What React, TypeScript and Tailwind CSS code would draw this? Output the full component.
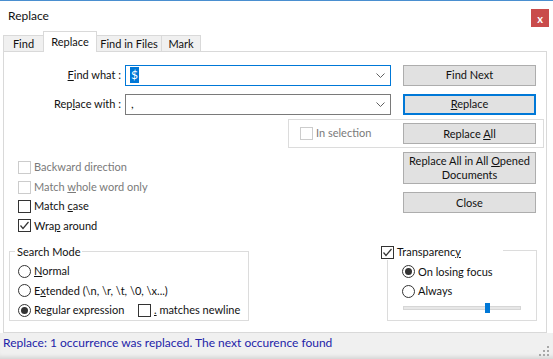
import React from 'react';

function Check({ checked = false, disabled = false }: { checked?: boolean; disabled?: boolean }) {
    return (
        <span
            className={
                'flex h-[13px] w-[13px] shrink-0 items-center justify-center border bg-white ' +
                (disabled ? 'border-[#cccccc]' : 'border-[#333333]')
            }
        >
            {checked && (
                <svg width="11" height="11" viewBox="0 0 11 11" fill="none" stroke="#333" strokeWidth="1.2">
                    <polyline points="1.5,5.5 4,8.5 9.5,2" />
                </svg>
            )}
        </span>
    );
}

function Radio({ checked = false }: { checked?: boolean }) {
    return (
        <span className="flex h-[13px] w-[13px] shrink-0 items-center justify-center rounded-full border border-[#333333] bg-white">
            {checked && <span className="h-[7px] w-[7px] rounded-full bg-[#333333]" />}
        </span>
    );
}

function Btn({ children, primary = false, className = '' }: { children: React.ReactNode; primary?: boolean; className?: string }) {
    return (
        <button
            className={
                'w-[133px] whitespace-nowrap bg-[#e1e1e1] text-center leading-[14px] ' +
                (primary ? 'border-2 border-[#0078d7] ' : 'border border-[#adadad] ') +
                className
            }
        >
            {children}
        </button>
    );
}

function Chevron() {
    return (
        <svg width="9" height="5" viewBox="0 0 9 5" fill="none" stroke="#606060" strokeWidth="1">
            <polyline points="0.5,0.5 4.5,4.5 8.5,0.5" />
        </svg>
    );
}

export default function App() {
    return (
        <div className="flex h-[359px] w-[553px] flex-col overflow-hidden bg-white font-['Lato','Liberation_Sans',sans-serif] text-[11px] text-[#111111]">
            {/* title bar */}
            <div className="flex h-[31px] shrink-0 items-start border-t border-[#4a8fd0] pl-[8px] pr-[4px]">
                <span className="mt-[7px] text-[12px] leading-[16px]">Replace</span>
                <span className="ml-auto mt-[8px] flex h-[18px] w-[18px] items-center justify-center bg-[#c94b4b] text-[11px] font-bold leading-none text-white">
                    x
                </span>
            </div>

            {/* tabs */}
            <div className="flex h-[20px] shrink-0 items-end pl-[3px]">
                <div className="flex h-[16px] w-[41px] items-center justify-center border border-b-0 border-[#d9d9d9] bg-[#f0f0f0] leading-none">
                    Find
                </div>
                <div className="relative z-10 -mb-px -ml-px flex h-[21px] w-[54px] items-start justify-center border border-b-0 border-[#d9d9d9] bg-white pt-[3px] leading-[14px]">
                    Replace
                </div>
                <div className="-ml-px flex h-[16px] w-[66px] items-center justify-center whitespace-nowrap border border-b-0 border-[#d9d9d9] bg-[#f0f0f0] leading-none">
                    Find in Files
                </div>
                <div className="-ml-px flex h-[16px] w-[40px] items-center justify-center border border-b-0 border-[#d9d9d9] bg-[#f0f0f0] leading-none">
                    Mark
                </div>
            </div>

            {/* tab panel */}
            <div className="ml-[3px] flex h-[282px] w-[544px] shrink-0 flex-col border border-[#d9d9d9] bg-white">
                <div className="mt-[12px] flex h-[22px] items-center">
                    <label className="w-[117px] text-right">
                        <span className="underline">F</span>ind what :
                    </label>
                    <div className="ml-[4px] flex h-[21px] w-[266px] items-center border border-[#0078d7] pl-[4px] pr-[5px]">
                        <span className="bg-[#0078d7] px-[1px] text-[12px] leading-[16px] text-white">$</span>
                        <span className="ml-auto">
                            <Chevron />
                        </span>
                    </div>
                    <Btn className="ml-auto mr-[10px] h-[21px]">Find Next</Btn>
                </div>

                <div className="mt-[7px] flex h-[22px] items-center">
                    <label className="w-[117px] text-right">
                        Rep<span className="underline">l</span>ace with :
                    </label>
                    <div className="ml-[4px] flex h-[21px] w-[266px] items-center border border-[#7a7a7a] pl-[5px] pr-[5px]">
                        <span className="text-[12px]">,</span>
                        <span className="ml-auto">
                            <Chevron />
                        </span>
                    </div>
                    <Btn primary className="ml-auto mr-[10px] h-[21px]">
                        <span className="underline">R</span>eplace
                    </Btn>
                </div>

                <div className="ml-[284px] mr-[2px] mt-[4px] flex h-[29px] items-center border border-[#dcdcdc] pl-[11px] pr-[7px]">
                    <Check disabled />
                    <span className="ml-[3px] text-[#7a7a7a]">
                        In select<span className="underline">i</span>on
                    </span>
                    <Btn className="ml-auto h-[21px]">
                        Replace <span className="underline">A</span>ll
                    </Btn>
                </div>

                <div className="flex items-start">
                    <div className="ml-[14px] mt-[10px] flex flex-col">
                        <div className="flex h-[19.4px] items-center">
                            <Check disabled />
                            <span className="ml-[3px] text-[#7a7a7a]">Backward direction</span>
                        </div>
                        <div className="flex h-[19.4px] items-center">
                            <Check disabled />
                            <span className="ml-[3px] text-[#7a7a7a]">
                                Match <span className="underline">w</span>hole word only
                            </span>
                        </div>
                        <div className="flex h-[19.4px] items-center">
                            <Check />
                            <span className="ml-[3px]">
                                Match <span className="underline">c</span>ase
                            </span>
                        </div>
                        <div className="flex h-[19.4px] items-center">
                            <Check checked />
                            <span className="ml-[3px]">
                                Wra<span className="underline">p</span> around
                            </span>
                        </div>
                    </div>
                    <div className="ml-auto mr-[10px] mt-[4px] flex flex-col">
                        <Btn className="h-[32px]">
                            Replace All in All <span className="underline">O</span>pened
                            <br />
                            Documents
                        </Btn>
                        <Btn className="mt-[8px] h-[21px]">Close</Btn>
                    </div>
                </div>

                <div className="mb-[11px] mt-auto flex items-end justify-between pl-[5px] pr-[9px]">
                    <fieldset className="w-[240px] border border-[#dcdcdc] pl-[5px]">
                        <legend className="px-[2px] leading-[16px]">Search Mode</legend>
                        <div className="ml-[3px] mt-[2px] flex flex-col whitespace-nowrap">
                            <div className="flex h-[19.5px] items-center">
                                <Radio />
                                <span className="ml-[3px]">
                                    <span className="underline">N</span>ormal
                                </span>
                            </div>
                            <div className="flex h-[19.5px] items-center">
                                <Radio />
                                <span className="ml-[3px]">
                                    E<span className="underline">x</span>tended (\n, \r, \t, \0, \x...)
                                </span>
                            </div>
                            <div className="flex h-[19.5px] items-center">
                                <div className="flex w-[120px] items-center">
                                    <Radio checked />
                                    <span className="ml-[3px]">
                                        Re<span className="underline">g</span>ular expression
                                    </span>
                                </div>
                                <Check />
                                <span className="ml-[3px]">
                                    <span className="underline">.</span> matches newline
                                </span>
                            </div>
                        </div>
                    </fieldset>

                    <div className="relative h-[71px] w-[150px] whitespace-nowrap border border-[#dcdcdc] pl-[14px] pt-[11px]">
                        <div className="absolute left-[-7px] top-[-5.5px] flex h-[14px] w-[122px] items-center bg-white">
                            <Check checked />
                            <span className="ml-[3px]">
                                Transparenc<span className="underline">y</span>
                            </span>
                        </div>
                        <div className="flex h-[19.5px] items-center">
                            <Radio checked />
                            <span className="ml-[3px]">On losing focus</span>
                        </div>
                        <div className="flex h-[19.5px] items-center">
                            <Radio />
                            <span className="ml-[3px]">Always</span>
                        </div>
                        <div className="relative ml-[1px] mt-[1px] flex h-[12px] w-[118px] items-center">
                            <div className="h-[4px] w-full border border-[#d6d6d6] bg-[#e7e7e7]" />
                            <div className="absolute left-[82px] top-[1px] h-[10px] w-[5px] bg-[#0078d7]" />
                        </div>
                    </div>
                </div>
            </div>

            {/* status bar */}
            <div className="flex flex-1 items-start bg-[#f0f0f0] pl-[3px] pr-[4px] pt-[3px] shadow-[inset_0_-5px_4px_-3px_rgba(0,0,0,0.12)]">
                <span className="text-[12px] leading-[14px] text-[#2323a8]">
                    Replace: 1 occurrence was replaced. The next occurence found
                </span>
                <svg className="ml-auto mt-[10px]" width="10" height="10" viewBox="0 0 10 10" fill="#a8a8a8">
                    <rect x="8" y="0" width="2" height="2" />
                    <rect x="4" y="4" width="2" height="2" />
                    <rect x="8" y="4" width="2" height="2" />
                    <rect x="0" y="8" width="2" height="2" />
                    <rect x="4" y="8" width="2" height="2" />
                    <rect x="8" y="8" width="2" height="2" />
                </svg>
            </div>
        </div>
    );
}
